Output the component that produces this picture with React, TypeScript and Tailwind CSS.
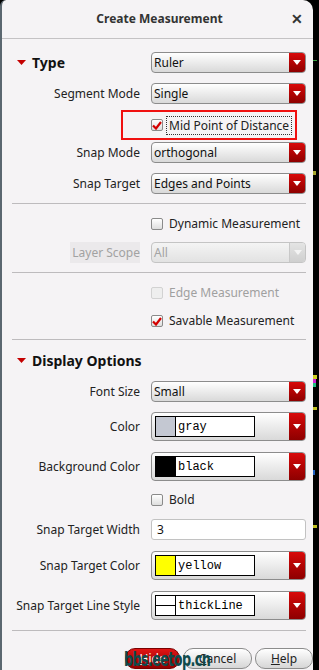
import React from "react";

const FONT = { fontFamily: '"Noto Sans", "Open Sans", sans-serif' };

// small red drop arrow used on combos
const ComboArrow = ({ disabled }: { disabled?: boolean }) => (
  <div
    className={
      disabled
        ? "w-[16px] h-full flex items-center justify-center bg-gradient-to-b from-[#e4e4e4] to-[#cfcfcf] border-l border-[#c8c8c8]"
        : "w-[16px] h-full flex items-center justify-center bg-gradient-to-b from-[#d80a0a] to-[#8e0000]"
    }
  >
    <svg width="8" height="5" viewBox="0 0 8 5">
      <path d="M0 0h8L4 5z" fill={disabled ? "#f4f4f4" : "#ffffff"} />
    </svg>
  </div>
);

const Combo = ({ value, disabled }: { value: string; disabled?: boolean }) => (
  <div
    className={
      "flex h-[21px] w-full rounded-[4px] border overflow-hidden " +
      (disabled ? "border-[#c4c4c4] bg-gradient-to-b from-[#f4f4f4] to-[#e2e2e2]" : "border-[#8c8c8c] bg-gradient-to-b from-[#ffffff] to-[#d9d9d9]")
    }
  >
    <div className={"flex-1 pl-[2px] flex items-center text-[12px] whitespace-nowrap " + (disabled ? "text-[#a3a3a3]" : "text-[#111]")}>{value}</div>
    <ComboArrow disabled={disabled} />
  </div>
);

const ColorCombo = ({ value, swatch }: { value: string; swatch: React.ReactNode }) => (
  <div className="flex h-[29px] w-full rounded-[4px] border border-[#8c8c8c] overflow-hidden bg-gradient-to-b from-[#ffffff] to-[#d9d9d9]">
    <div className="flex-1 flex items-center pl-[3px]">
      <div className="flex h-[21px] w-[100px] border border-black bg-white">
        <div className="w-[20px] h-full border-r border-black">{swatch}</div>
        <div
          className="flex-1 flex items-center pl-[2px] text-[12px] text-black"
          style={{ fontFamily: '"Liberation Mono", "DejaVu Sans Mono", monospace' }}
        >
          {value}
        </div>
      </div>
    </div>
    <ComboArrow />
  </div>
);

const Check = ({ checked, disabled }: { checked?: boolean; disabled?: boolean }) => (
  <div
    className={
      "w-[12px] h-[12px] rounded-[2px] border flex items-center justify-center shrink-0 " +
      (disabled ? "border-[#d2d2d2] bg-[#eeeeee]" : "border-[#8a8a8a] bg-gradient-to-b from-[#ffffff] to-[#dedede]")
    }
  >
    {checked && (
      <svg width="10" height="9" viewBox="0 0 10 9">
        <path d="M1 4.5l3 3L9 1" fill="none" stroke="#d40000" strokeWidth="2.2" />
      </svg>
    )}
  </div>
);

const Row = ({ label, children, grey, className }: { label?: string; children: React.ReactNode; grey?: boolean; className?: string }) => (
  <div className={"grid grid-cols-[128px_155px] gap-x-[11px] items-center " + (className || "")}>
    <div className="flex justify-end h-full items-center">
      {label && (
        <span className={"text-[12px] h-full flex items-center whitespace-nowrap " + (grey ? "text-[#a2a2a2] bg-[#ebe9eb] pl-[2px]" : "text-[#222]")}>{label}</span>
      )}
    </div>
    <div>{children}</div>
  </div>
);

const CheckRow = ({ text, checked, disabled, className }: { text: string; checked?: boolean; disabled?: boolean; className?: string }) => (
  <div className={"flex items-center h-[20px] pl-[139px] " + (className || "")}>
    <Check checked={checked} disabled={disabled} />
    <span className={"ml-[6px] text-[12px] whitespace-nowrap " + (disabled ? "text-[#a0a0a0]" : "text-[#222]")}>{text}</span>
  </div>
);

const Header = ({ text, className }: { text: string; className?: string }) => (
  <div className={"flex items-center h-[20px] pl-[5px] " + (className || "")}>
    <svg width="9" height="5" viewBox="0 0 9 5">
      <path d="M0 0h9L4.5 5z" fill="#c40000" />
    </svg>
    <span className="ml-[6px] text-[14px] font-bold text-[#111] whitespace-nowrap">{text}</span>
  </div>
);

const Sep = ({ className }: { className?: string }) => <div className={"h-px bg-[#bdbbbd] mr-[7px] " + (className || "")} />;

export default function App() {
  return (
    <div className="w-[319px] h-[670px] flex bg-black overflow-hidden" style={FONT}>
      <div className="w-[313px] h-full bg-[#f5f3f5] border-l-2 border-[#5b6770] rounded-tl-[6px] rounded-tr-[10px] flex flex-col shrink-0 relative">
        {/* title bar */}
        <div className="h-[39px] border-b border-[#c4c2c4] flex items-center relative shrink-0">
          <div className="flex-1 text-center text-[12px] font-bold text-[#333] pl-[4px]">Create Measurement</div>
          <div className="absolute right-[10px] top-[12px] text-[14px] font-bold text-[#333] leading-none">✕</div>
        </div>

        <div className="flex flex-col pl-[10px]">
          <div className="grid grid-cols-[128px_155px] gap-x-[11px] items-center mt-[13px]">
            <Header text="Type" />
            <Combo value="Ruler" />
          </div>
          <Row label="Segment Mode" className="mt-[10px] h-[21px]">
            <Combo value="Single" />
          </Row>

          <div className="mt-[6px] h-[30px] ml-[109px] w-[176px] border-2 border-[#f01010] flex items-center pl-[28px]">
            <Check checked />
            <span className="ml-[3px] text-[12px] text-[#222] border border-dotted border-[#333] px-[2px] leading-[17px] whitespace-nowrap">Mid Point of Distance</span>
          </div>

          <Row label="Snap Mode" className="mt-[2px] h-[21px]">
            <Combo value="orthogonal" />
          </Row>
          <Row label="Snap Target" className="mt-[10px] h-[21px]">
            <Combo value="Edges and Points" />
          </Row>

          <Sep className="mt-[9px]" />
          <CheckRow text="Dynamic Measurement" className="mt-[10px]" />
          <Row label="Layer Scope" grey className="mt-[8px] h-[21px]">
            <Combo value="All" disabled />
          </Row>

          <Sep className="mt-[9px]" />
          <CheckRow text="Edge Measurement" disabled className="mt-[10px]" />
          <CheckRow text="Savable Measurement" checked className="mt-[8px]" />

          <Sep className="mt-[8px]" />
          <Header text="Display Options" className="mt-[10px]" />
          <Row label="Font Size" className="mt-[11px] h-[21px]">
            <Combo value="Small" />
          </Row>
          <Row label="Color" className="mt-[10px] h-[29px]">
            <ColorCombo value="gray" swatch={<div className="w-full h-full bg-[#c4c8d2]" />} />
          </Row>
          <Row label="Background Color" className="mt-[11px] h-[29px]">
            <ColorCombo value="black" swatch={<div className="w-full h-full bg-black" />} />
          </Row>
          <CheckRow text="Bold" className="mt-[9px]" />
          <Row label="Snap Target Width" className="mt-[9px] h-[21px]">
            <div className="h-[21px] w-full rounded-[3px] border border-[#c2c2c2] bg-white flex items-center pl-[5px] text-[12px] text-[#111]">3</div>
          </Row>
          <Row label="Snap Target Color" className="mt-[11px] h-[29px]">
            <ColorCombo value="yellow" swatch={<div className="w-full h-full bg-[#ffff00]" />} />
          </Row>
          <Row label="Snap Target Line Style" className="mt-[11px] h-[29px]">
            <ColorCombo
              value="thickLine"
              swatch={
                <div className="w-full h-full flex flex-col justify-center">
                  <div className="h-px bg-black" />
                </div>
              }
            />
          </Row>

          <Sep className="mt-[10px]" />

          <div className="mt-[17px] flex items-center h-[21px] pl-[113px] gap-[3px] relative">
            <div className="w-[56px] h-[21px] rounded-[10px] border border-[#7a0000] bg-gradient-to-b from-[#e01515] to-[#930000] flex items-center justify-center text-[12px] text-white">
              <span><span className="underline">H</span>ide</span>
            </div>
            <div className="w-[70px] h-[21px] rounded-[10px] border border-[#8c8c8c] bg-gradient-to-b from-[#ffffff] to-[#d6d6d6] flex items-center justify-center text-[12px] text-[#222]">
              <span><span className="underline">C</span>ancel</span>
            </div>
            <div className="w-[58px] h-[21px] rounded-[10px] border border-[#8c8c8c] bg-gradient-to-b from-[#ffffff] to-[#d6d6d6] flex items-center justify-center text-[12px] text-[#222] shrink-0">
              <span><span className="underline">H</span>elp</span>
            </div>
            {/* watermark printed over the buttons */}
            <div
              className="absolute left-[112px] top-[1px] text-[20px] font-bold text-[#0e4a4c] leading-none tracking-[-1px] origin-left scale-x-[0.64]"
              style={{ fontFamily: '"DejaVu Sans", sans-serif' }}
            >
              bbs.eetop.cn
            </div>
          </div>
        </div>
      </div>

      {/* background strip behind the dialog */}
      <div className="flex-1 flex flex-col bg-black">
        <div className="h-[60px]" />
        <div className="h-px bg-[#35a040] w-[4px]" />
        <div className="h-[110px]" />
        <div className="h-[4px] bg-[#a8a830] w-[3px]" />
        <div className="h-[200px]" />
        <div className="h-[4px] bg-[#d0d020] w-[4px]" />
        <div className="h-[4px] bg-[#d020d0] w-[3px]" />
        <div className="h-[4px] bg-[#20c080] w-[3px]" />
        <div className="h-[20px]" />
        <div className="h-[3px] bg-[#c0c020] w-[4px]" />
        <div className="h-[60px]" />
        <div className="h-[5px] bg-[#2060c0] w-[2px]" />
        <div className="h-[50px]" />
        <div className="h-[3px] bg-[#c0c020] w-[4px]" />
      </div>
    </div>
  );
}
